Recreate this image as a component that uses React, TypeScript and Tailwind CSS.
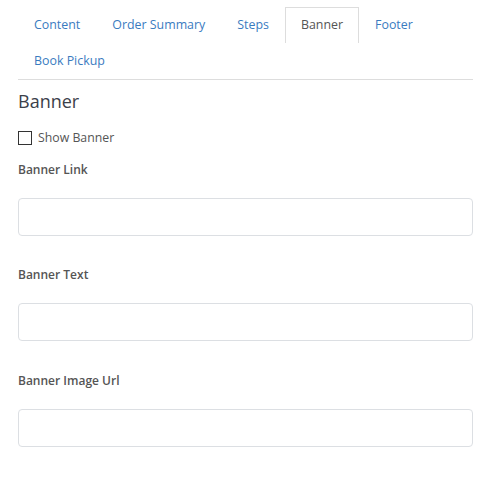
import { useState } from "react";

const tabs = ["Content", "Order Summary", "Steps", "Banner", "Footer", "Book Pickup"];

const fields = [
  { label: "Banner Link", gap: "mt-[13px]" },
  { label: "Banner Text", gap: "mt-[30px]" },
  { label: "Banner Image Url", gap: "mt-[31px]" },
];

export default function App() {
  const [active, setActive] = useState("Banner");
  const [showBanner, setShowBanner] = useState(false);

  return (
    <div className="min-h-screen bg-white pl-[18px] pr-[19px] pt-[7px] font-['Open_Sans',sans-serif]">
      <ul className="flex flex-wrap border-b border-[#dddddd]">
        {tabs.map((tab) => (
          <li key={tab}>
            <button
              onClick={() => setActive(tab)}
              className={
                tab === active
                  ? "h-9 border border-b-0 border-[#dddddd] bg-white px-[15px] text-[12.4px] text-[#555555]"
                  : "h-9 border border-transparent px-[15px] text-[12.4px] text-[#3a7bbf]"
              }
            >
              {tab}
            </button>
          </li>
        ))}
      </ul>

      <h2 className="mt-[9px] text-[18px] leading-6 text-[#3b4049]">Banner</h2>

      <label className="mt-[15px] flex h-5 items-center gap-[6px] text-[12.3px] text-[#555555]">
        <input
          type="checkbox"
          checked={showBanner}
          onChange={(e) => setShowBanner(e.target.checked)}
          className="h-[14px] w-[14px] appearance-none border-[1.5px] border-[#333333] bg-white checked:bg-[#3a7bbf]"
        />
        Show Banner
      </label>

      {fields.map((field) => (
        <div key={field.label} className={field.gap}>
          <p className="text-[12px] font-semibold leading-[18px] text-[#555555]">{field.label}</p>
          <input
            type="text"
            className="mt-[19px] block h-[38px] w-full rounded-[4px] border border-[#dcdfe3] px-3 text-[13px] outline-none focus:border-[#3a7bbf]"
          />
        </div>
      ))}
    </div>
  );
}
